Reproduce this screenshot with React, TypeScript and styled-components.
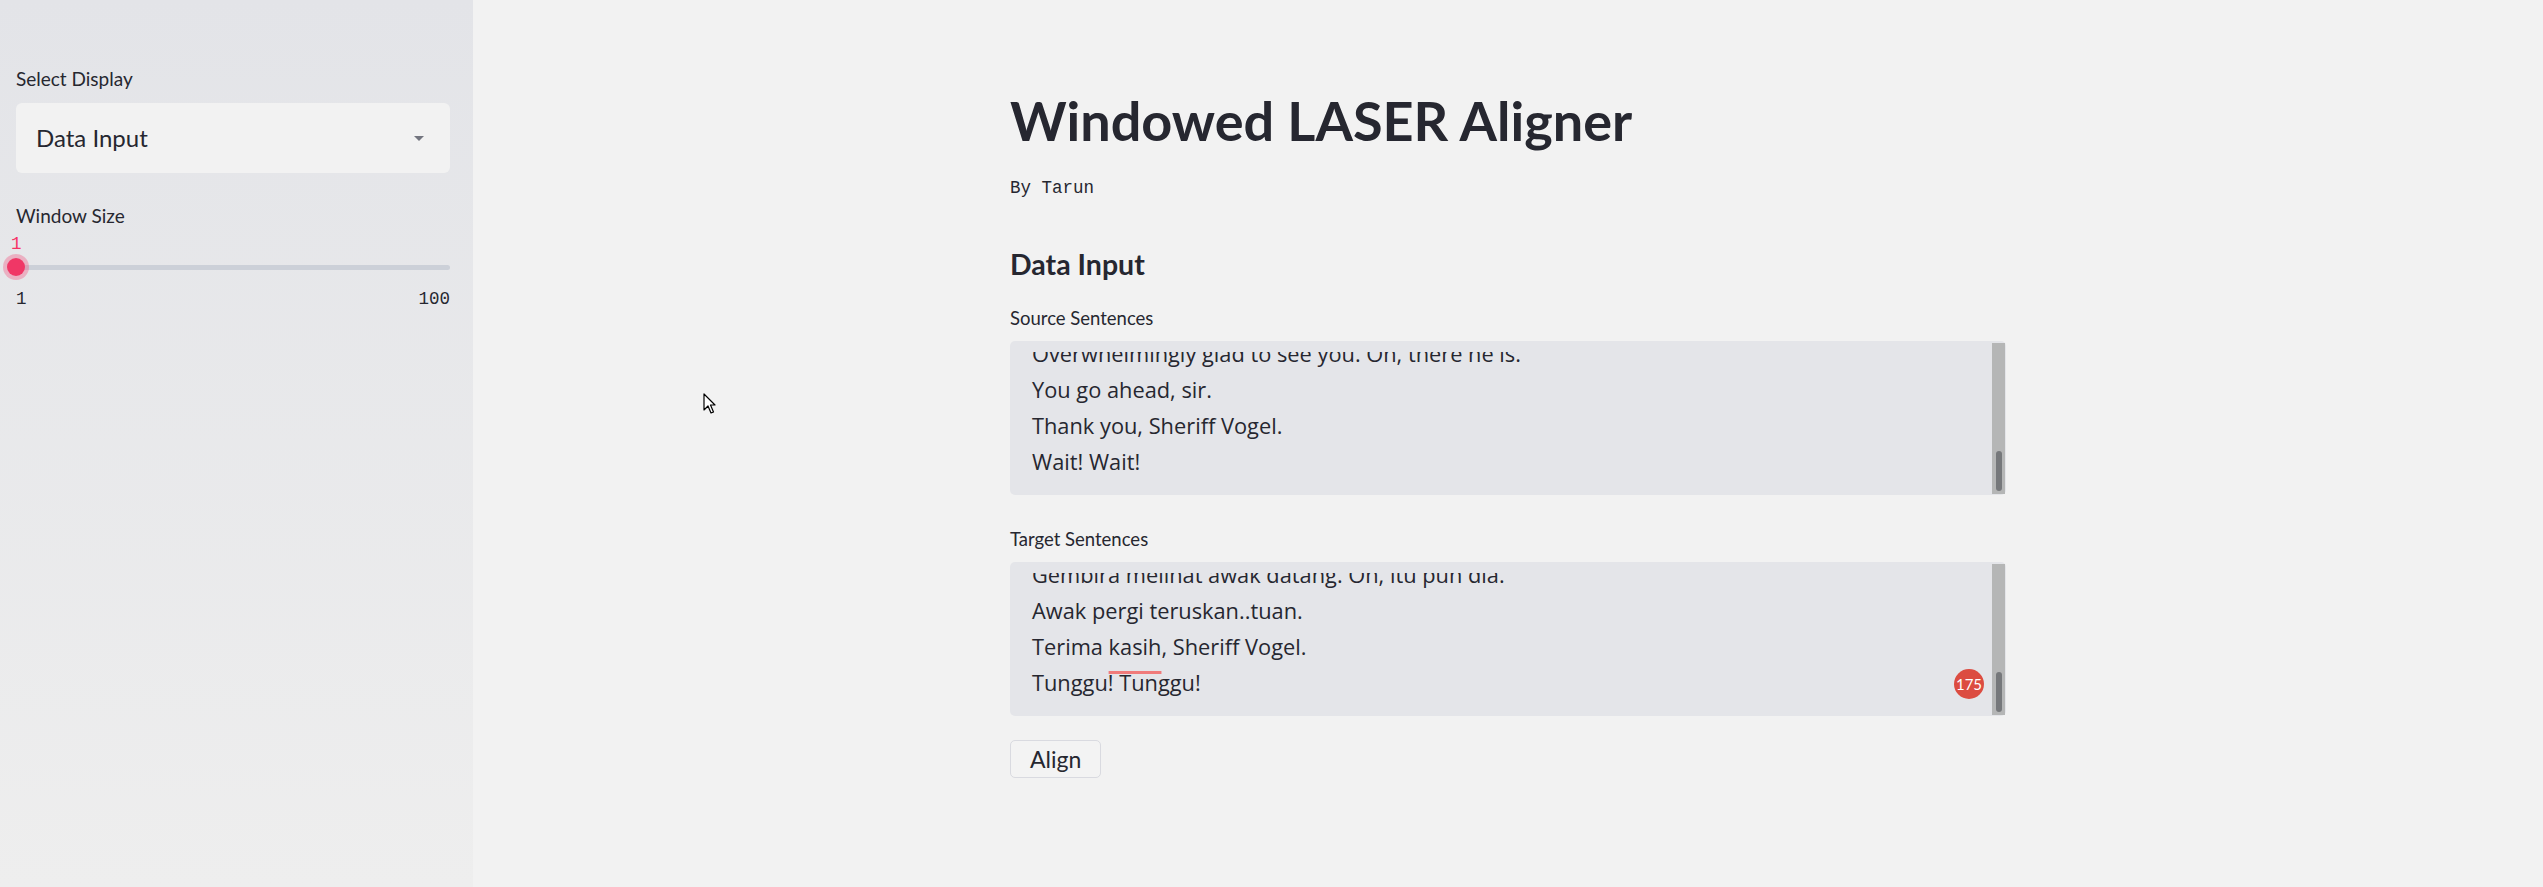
import React from "react";
import styled, { createGlobalStyle } from "styled-components";

const GlobalStyle = createGlobalStyle`
  html, body { margin: 0; padding: 0; }
  body {
    background: #f2f2f2;
    font-family: Lato, "Open Sans", sans-serif;
    color: #262730;
  }
  * { box-sizing: border-box; }
`;

const Page = styled.div`
  position: relative;
  display: flex;
  min-height: 100vh;
`;

const Sidebar = styled.aside`
  width: 473px;
  flex-shrink: 0;
  background: linear-gradient(180deg, #e3e4e8 0%, #eeeeee 100%);
  padding: 67px 23px 0 16px;
  display: flex;
  flex-direction: column;
`;

const SideLabel = styled.div<{ $top?: number }>`
  margin-top: ${(p) => p.$top ?? 0}px;
  font-size: 19px;
  line-height: 24px;
  color: #262730;
`;

const SelectBox = styled.div`
  margin-top: 12px;
  height: 70px;
  background: #f2f2f2;
  border-radius: 6px;
  display: flex;
  align-items: center;
  justify-content: space-between;
  padding: 0 26px 0 20px;
  font-size: 24px;
  line-height: 70px;
  color: #262730;
`;

const Slider = styled.div`
  margin-top: 6px;
  display: flex;
  flex-direction: column;
`;

const Mono = styled.span`
  font-family: "Liberation Mono", "DejaVu Sans Mono", monospace;
  font-size: 17.5px;
  line-height: 20px;
`;

const SliderValue = styled(Mono)`
  color: #f63366;
  margin-left: -5px;
`;

const TrackRow = styled.div`
  position: relative;
  height: 26px;
  display: flex;
  align-items: center;
`;

const Track = styled.div`
  flex: 1;
  height: 5px;
  border-radius: 3px;
  background: #ccd0d8;
`;

const Thumb = styled.div`
  position: absolute;
  left: -9px;
  top: 50%;
  width: 18px;
  height: 18px;
  border-radius: 50%;
  background: #f03766;
  box-shadow: 0 0 0 4px rgba(246, 51, 102, 0.3);
  transform: translateY(-50%);
`;

const TickRow = styled.div`
  margin-top: 9px;
  display: flex;
  justify-content: space-between;
  color: #262730;
`;

const Main = styled.main`
  flex: 1;
  display: flex;
  justify-content: center;
  padding-top: 89px;
`;

const Column = styled.div`
  width: 996px;
  display: flex;
  flex-direction: column;
`;

const Title = styled.h1`
  margin: 0;
  font-weight: 700;
  font-size: 54px;
  line-height: 64px;
  color: #262730;
`;

const Byline = styled.div`
  margin-top: 23px;
  font-family: "Liberation Mono", "DejaVu Sans Mono", monospace;
  font-size: 17.5px;
  line-height: 24px;
  color: #262730;
`;

const SectionHeading = styled.h2`
  margin: 46px 0 0;
  font-weight: 700;
  font-size: 28.5px;
  line-height: 36px;
  color: #262730;
`;

const Field = styled.div<{ $top: number }>`
  margin-top: ${(p) => p.$top}px;
  display: flex;
  flex-direction: column;
`;

const FieldLabel = styled.div`
  font-size: 18.5px;
  line-height: 22px;
  color: #262730;
`;

const TextBox = styled.div`
  position: relative;
  margin-top: 12px;
  height: 154px;
  background: #e4e5e9;
  border-radius: 5px;
  display: flex;
  padding: 2px 1px 1px 0;
`;

const Viewport = styled.div`
  flex: 1;
  margin-top: 9px;
  padding: 0 0 14px 22px;
  overflow: hidden;
  display: flex;
  flex-direction: column;
  justify-content: flex-end;
  font-family: "Open Sans", "Noto Sans", sans-serif;
  font-size: 21.8px;
  line-height: 36px;
  color: #262730;
`;

const Line = styled.div`
  white-space: nowrap;
  flex-shrink: 0;
`;

const Misspelled = styled.span`
  text-decoration: underline;
  text-decoration-color: #f07b7b;
  text-decoration-thickness: 3px;
  text-underline-offset: 16px;
`;

const ScrollTrack = styled.div`
  width: 13px;
  background: #b5b6b6;
  display: flex;
  flex-direction: column;
  justify-content: flex-end;
  align-items: center;
  padding-bottom: 3px;
`;

const ScrollThumb = styled.div`
  width: 6px;
  height: 40px;
  border-radius: 3px;
  background: #76787b;
`;

const Badge = styled.div`
  position: absolute;
  right: 22px;
  top: 107px;
  width: 30px;
  height: 30px;
  border-radius: 50%;
  background: #dc4c41;
  color: #ffffff;
  font-size: 15px;
  display: flex;
  align-items: center;
  justify-content: center;
`;

const AlignButton = styled.button`
  margin-top: 24px;
  align-self: flex-start;
  height: 38px;
  padding: 0 19px;
  border: 1px solid #d9dae0;
  border-radius: 5px;
  background: #f3f3f3;
  font-family: Lato, "Open Sans", sans-serif;
  font-size: 23px;
  line-height: 1;
  color: #262730;
`;

const Cursor = styled.svg`
  position: absolute;
  left: 703px;
  top: 393px;
`;

const Caret = () => (
  <svg width="10" height="5" viewBox="0 0 10 5">
    <polygon points="0,0 10,0 5,5" fill="#73757f" />
  </svg>
);

const sourceLines = [
  "Overwhelmingly glad to see you. Oh, there he is.",
  "You go ahead, sir.",
  "Thank you, Sheriff Vogel.",
  "Wait! Wait!",
];

export default function App() {
  return (
    <>
      <GlobalStyle />
      <Page>
        <Sidebar>
          <SideLabel>Select Display</SideLabel>
          <SelectBox>
            <span>Data Input</span>
            <Caret />
          </SelectBox>
          <SideLabel $top={31}>Window Size</SideLabel>
          <Slider>
            <SliderValue>1</SliderValue>
            <TrackRow>
              <Track />
              <Thumb />
            </TrackRow>
            <TickRow>
              <Mono>1</Mono>
              <Mono>100</Mono>
            </TickRow>
          </Slider>
        </Sidebar>
        <Main>
          <Column>
            <Title>Windowed LASER Aligner</Title>
            <Byline>By Tarun</Byline>
            <SectionHeading>Data Input</SectionHeading>
            <Field $top={25}>
              <FieldLabel>Source Sentences</FieldLabel>
              <TextBox>
                <Viewport>
                  {sourceLines.map((l) => (
                    <Line key={l}>{l}</Line>
                  ))}
                </Viewport>
                <ScrollTrack>
                  <ScrollThumb />
                </ScrollTrack>
              </TextBox>
            </Field>
            <Field $top={33}>
              <FieldLabel>Target Sentences</FieldLabel>
              <TextBox>
                <Viewport>
                  <Line>Gembira melihat awak datang. Oh, itu pun dia.</Line>
                  <Line>Awak pergi teruskan..tuan.</Line>
                  <Line>
                    Terima <Misspelled>kasih</Misspelled>, Sheriff Vogel.
                  </Line>
                  <Line>Tunggu! Tunggu!</Line>
                </Viewport>
                <ScrollTrack>
                  <ScrollThumb />
                </ScrollTrack>
                <Badge>175</Badge>
              </TextBox>
            </Field>
            <AlignButton>Align</AlignButton>
          </Column>
        </Main>
        <Cursor width="13" height="21" viewBox="0 0 13 21">
          <path
            d="M1 1 L1 17 L5 13 L8 20 L10.5 19 L7.5 12 L12 12 Z"
            fill="#ffffff"
            stroke="#000000"
            strokeWidth="1.2"
            strokeLinejoin="round"
          />
        </Cursor>
      </Page>
    </>
  );
}
